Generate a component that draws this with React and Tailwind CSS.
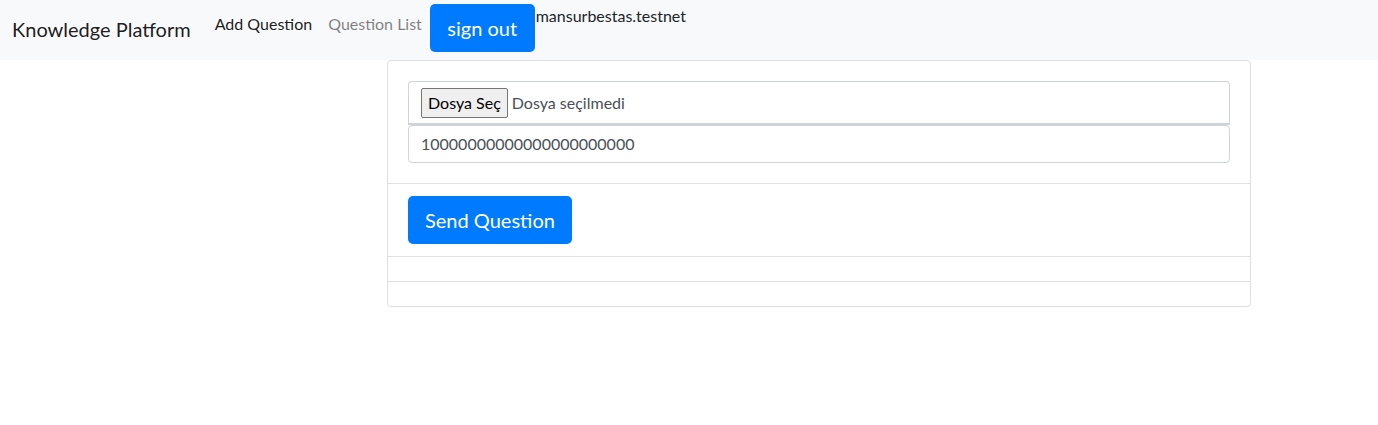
export default function App() {
  const font = { fontFamily: 'Lato, "Noto Sans", sans-serif' };
  return (
    <div className="min-h-[425px] bg-white text-[#212529]" style={font}>
      <nav className="flex h-[60px] items-start bg-[#f8f9fa] px-[12px] py-[4px]">
        <a className="mr-4 -mt-[2px] self-center text-[20px] leading-[30px] text-black/90">Knowledge Platform</a>
        <a className="px-2 py-2 text-[16px] leading-6 text-black/90">Add Question</a>
        <a className="px-2 py-2 text-[16px] leading-6 text-black/50">Question List</a>
        <button className="h-12 rounded-[5px] bg-[#007bff] px-[17.5px] text-[20px] leading-[30px] text-white">sign out</button>
        <span className="ml-px text-[16px] leading-6">mansurbestas.testnet</span>
      </nav>
      <div className="ml-[387px] w-[864px] rounded border border-black/[.125]">
        <div className="flex flex-col p-5">
          <div className="flex h-[44px] items-center rounded-t border border-b-2 border-[#ced4da] px-3">
            <span className="rounded-[2px] border border-[#767676] bg-[#efefef] px-[6px] text-[16px] leading-[28px] text-black">Dosya Seç</span>
            <span className="ml-1 text-[16px] text-[#495057]">Dosya seçilmedi</span>
          </div>
          <div className="flex h-[38px] items-center rounded border border-[#ced4da] px-3 text-[16px] text-[#495057]">
            10000000000000000000000
          </div>
        </div>
        <div className="border-t border-black/[.125] px-5 py-3">
          <button className="h-12 rounded-[5px] bg-[#007bff] px-[17px] text-[20px] leading-[30px] text-white">Send Question</button>
        </div>
        <div className="h-[25px] border-t border-black/[.125]" />
        <div className="h-[25px] border-t border-black/[.125]" />
      </div>
    </div>
  );
}
